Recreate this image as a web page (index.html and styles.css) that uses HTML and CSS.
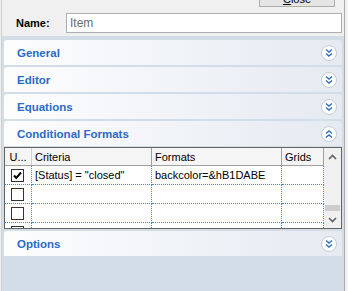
FILE: index.html
```html
<!DOCTYPE html>
<html lang="en">
<head>
    <meta charset="UTF-8">
    <title>Item</title>
    <link rel="stylesheet" href="styles.css">
</head>
<body>
    <div class="window">
        <div class="topbar">
            <button class="close-btn"><u>C</u>lose</button>
        </div>

        <div class="name-row">
            <label for="name">Name:</label>
            <input type="text" id="name" value="Item">
        </div>

        <div class="panels">
            <div class="panel">
                <div class="panel-head">
                    <span>General</span>
                    <svg class="chev" width="16" height="16" viewBox="0 0 16 16"><circle cx="8" cy="8" r="7.5" fill="#fff" stroke="#c3ccd8"/><polyline points="5,4.5 8,7 11,4.5" fill="none" stroke="#2f6fc4" stroke-width="1.4"/><polyline points="5,8.5 8,11 11,8.5" fill="none" stroke="#2f6fc4" stroke-width="1.4"/></svg>
                </div>
            </div>
            <div class="panel">
                <div class="panel-head">
                    <span>Editor</span>
                    <svg class="chev" width="16" height="16" viewBox="0 0 16 16"><circle cx="8" cy="8" r="7.5" fill="#fff" stroke="#c3ccd8"/><polyline points="5,4.5 8,7 11,4.5" fill="none" stroke="#2f6fc4" stroke-width="1.4"/><polyline points="5,8.5 8,11 11,8.5" fill="none" stroke="#2f6fc4" stroke-width="1.4"/></svg>
                </div>
            </div>
            <div class="panel">
                <div class="panel-head">
                    <span>Equations</span>
                    <svg class="chev" width="16" height="16" viewBox="0 0 16 16"><circle cx="8" cy="8" r="7.5" fill="#fff" stroke="#c3ccd8"/><polyline points="5,4.5 8,7 11,4.5" fill="none" stroke="#2f6fc4" stroke-width="1.4"/><polyline points="5,8.5 8,11 11,8.5" fill="none" stroke="#2f6fc4" stroke-width="1.4"/></svg>
                </div>
            </div>
            <div class="panel">
                <div class="panel-head">
                    <span>Conditional Formats</span>
                    <svg class="chev" width="16" height="16" viewBox="0 0 16 16"><circle cx="8" cy="8" r="7.5" fill="#fff" stroke="#c3ccd8"/><polyline points="5,7.5 8,5 11,7.5" fill="none" stroke="#2f6fc4" stroke-width="1.4"/><polyline points="5,11.5 8,9 11,11.5" fill="none" stroke="#2f6fc4" stroke-width="1.4"/></svg>
                </div>
                <div class="panel-body">
                    <div class="grid">
                        <div class="grid-main">
                            <div class="row head">
                                <div class="cell c1">U...</div>
                                <div class="cell c2">Criteria</div>
                                <div class="cell c3">Formats</div>
                                <div class="cell c4">Grids</div>
                            </div>
                            <div class="row">
                                <div class="cell c1"><span class="check on"><svg width="11" height="11" viewBox="0 0 11 11"><polyline points="2,5.5 4.3,8 9,2.5" fill="none" stroke="#000" stroke-width="2"/></svg></span></div>
                                <div class="cell c2">[Status] = "closed"</div>
                                <div class="cell c3">backcolor=&amp;hB1DABE</div>
                                <div class="cell c4"></div>
                            </div>
                            <div class="row">
                                <div class="cell c1"><span class="check"></span></div>
                                <div class="cell c2"></div>
                                <div class="cell c3"></div>
                                <div class="cell c4"></div>
                            </div>
                            <div class="row">
                                <div class="cell c1"><span class="check"></span></div>
                                <div class="cell c2"></div>
                                <div class="cell c3"></div>
                                <div class="cell c4"></div>
                            </div>
                            <div class="row">
                                <div class="cell c1"><span class="check"></span></div>
                                <div class="cell c2"></div>
                                <div class="cell c3"></div>
                                <div class="cell c4"></div>
                            </div>
                        </div>
                        <div class="scrollbar">
                            <div class="sb-btn"><svg width="9" height="6" viewBox="0 0 9 6"><polyline points="1,5 4.5,1.5 8,5" fill="none" stroke="#606060" stroke-width="1.6"/></svg></div>
                            <div class="sb-track"><div class="sb-thumb"></div></div>
                            <div class="sb-btn"><svg width="9" height="6" viewBox="0 0 9 6"><polyline points="1,1 4.5,4.5 8,1" fill="none" stroke="#606060" stroke-width="1.6"/></svg></div>
                        </div>
                    </div>
                </div>
            </div>
            <div class="panel">
                <div class="panel-head">
                    <span>Options</span>
                    <svg class="chev" width="16" height="16" viewBox="0 0 16 16"><circle cx="8" cy="8" r="7.5" fill="#fff" stroke="#c3ccd8"/><polyline points="5,4.5 8,7 11,4.5" fill="none" stroke="#2f6fc4" stroke-width="1.4"/><polyline points="5,8.5 8,11 11,8.5" fill="none" stroke="#2f6fc4" stroke-width="1.4"/></svg>
                </div>
            </div>
        </div>
    </div>
</body>
</html>
```

FILE: styles.css
```css
/* Janela */
body {
    margin: 0;
    background: #f0f0f0;
    font-family: "Liberation Sans", Arial, sans-serif;
    font-size: 11px;
    overflow: hidden;
    height: 291px;
}

.window {
    margin-left: 1px;
    width: 344px;
    height: 291px;
    box-sizing: border-box;
    border-left: 1px solid #cfcfcf;
    border-right: 1px solid #a9a9a9;
}

.topbar {
    display: flex;
    height: 13px;
}

.close-btn {
    margin: -15px 0 0 257px;
    width: 76px;
    height: 22px;
    padding: 5px 0 0;
    background: #e5e5e5;
    border: 1px solid #acacac;
    font-family: "Liberation Sans", Arial, sans-serif;
    font-size: 11px;
    color: #000;
}

.name-row {
    display: flex;
    align-items: center;
    height: 20px;
    margin-bottom: 3px;
    padding-left: 14px;
}

.name-row label {
    width: 50px;
    font-weight: bold;
    font-size: 11px;
    color: #000;
}

.name-row input {
    width: 276px;
    height: 20px;
    box-sizing: border-box;
    margin: 0;
    padding: 0 3px;
    border: 1px solid #abadb3;
    background: #fff;
    font-family: "Liberation Sans", Arial, sans-serif;
    font-size: 12px;
    color: #6d6d6d;
}

/* Painéis */
.panels {
    height: 255px;
    padding: 4px 2px 0;
    background: #d3dde8;
    display: flex;
    flex-direction: column;
    gap: 2px;
}

.panel-head {
    height: 25px;
    box-sizing: border-box;
    display: flex;
    align-items: center;
    justify-content: space-between;
    padding: 0 5px 0 13px;
    border-radius: 3px 3px 0 0;
    background: linear-gradient(to right, #fdfdfe, #e5eaf1);
    color: #2a6bc6;
    font-weight: bold;
    font-size: 11.5px;
}

.panel-body {
    padding-top: 1px;
}

/* Grade */
.grid {
    display: flex;
    height: 82px;
    box-sizing: border-box;
    border: 1px solid #646464;
    background: #fff;
    overflow: hidden;
}

.grid-main {
    width: 319px;
}

.row {
    display: flex;
    height: 19px;
}

.row.head {
    height: 18px;
    background: #f5f5f5;
    border-bottom: 1px solid #a0a0a0;
    box-sizing: border-box;
}

.cell {
    box-sizing: border-box;
    height: 19px;
    padding: 0 3px;
    display: flex;
    align-items: center;
    border-right: 1px dotted #1e8fff;
    border-bottom: 1px dotted #1e8fff;
    color: #000;
    white-space: nowrap;
    overflow: hidden;
}

.row.head .cell {
    height: 17px;
    border-bottom: none;
    border-right: 1px solid #a0a0a0;
    color: #000;
}

.row.head .c1 {
    border-right-color: #d0d0d0;
}

.c1 { width: 27px; justify-content: center; padding: 0; }
.c2 { width: 120px; }
.c3 { width: 130px; }
.c4 { width: 42px; }

.check {
    width: 13px;
    height: 13px;
    box-sizing: border-box;
    border: 1px solid #333;
    background: #fff;
    display: flex;
    align-items: center;
    justify-content: center;
    margin-left: -1px;
}

/* Barra de rolagem */
.scrollbar {
    width: 17px;
    display: flex;
    flex-direction: column;
    background: #f0f0f0;
}

.sb-btn {
    height: 17px;
    display: flex;
    align-items: center;
    justify-content: center;
}

.sb-track {
    flex: 1;
    display: flex;
    flex-direction: column;
    justify-content: flex-end;
    padding: 0 1px;
}

.sb-thumb {
    height: 6px;
    background: #cdcdcd;
}
```
